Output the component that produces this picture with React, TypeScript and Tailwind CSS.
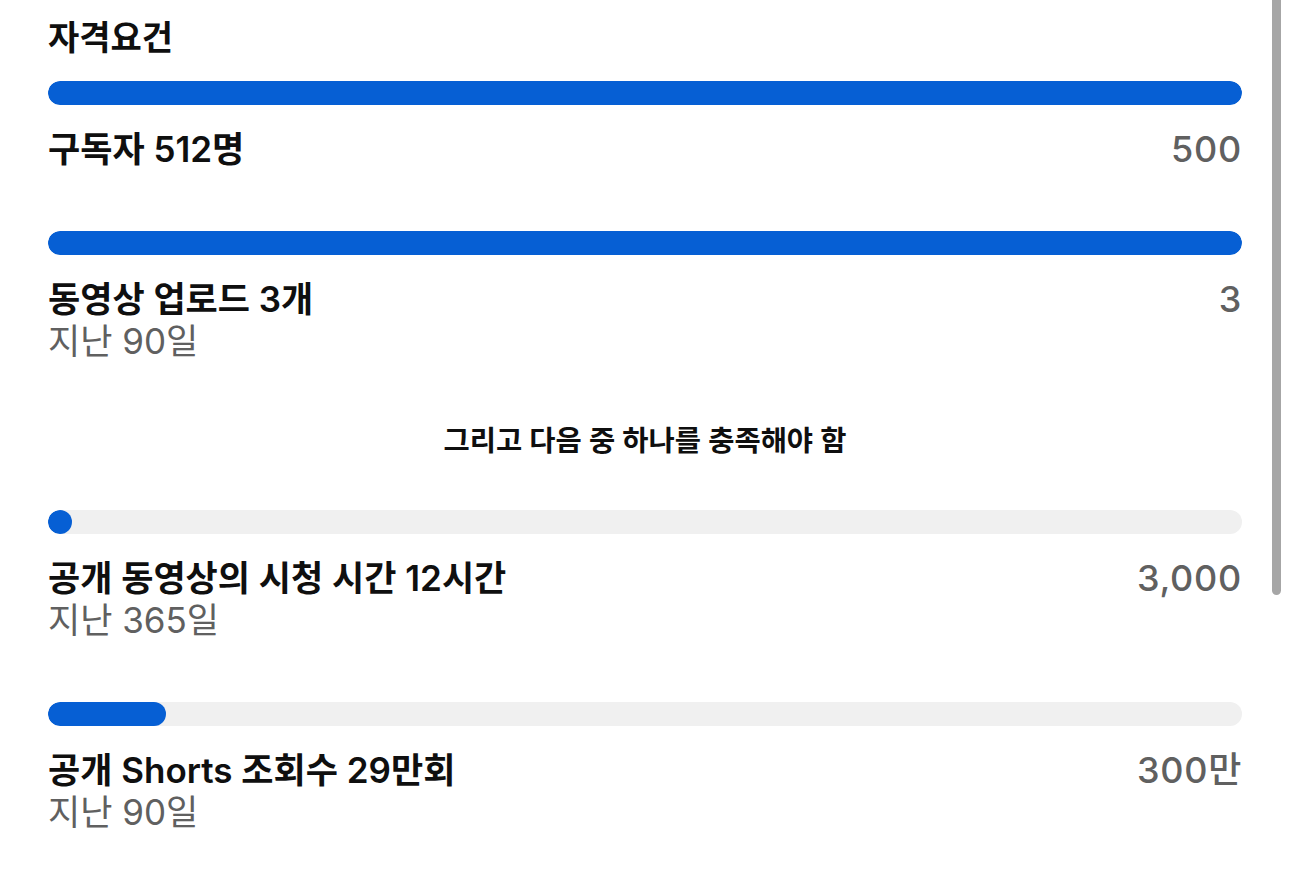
const items = [
  { label: "구독자 512명", value: "500", sub: "", fill: "w-full" },
  { label: "동영상 업로드 3개", value: "3", sub: "지난 90일", fill: "w-full" },
];

const optional = [
  { label: "공개 동영상의 시청 시간 12시간", value: "3,000", sub: "지난 365일", fill: "w-6" },
  { label: "공개 Shorts 조회수 29만회", value: "300만", sub: "지난 90일", fill: "w-[118px]" },
];

type Req = { label: string; value: string; sub: string; fill: string };

function Requirement({ r, className }: { r: Req; className: string }) {
  return (
    <div className={className}>
      <div className="h-6 w-full rounded-full bg-[#f0f0f0] overflow-hidden">
        <div className={`h-6 rounded-full bg-[#065fd4] ${r.fill}`} />
      </div>
      <div className="mt-[22px] flex justify-between items-center h-[44px]">
        <span className="text-[35px] font-semibold text-[#0f0f0f]">{r.label}</span>
        <span className="text-[36px] font-medium tracking-[0.02em] text-[#606060]">{r.value}</span>
      </div>
      {r.sub && (
        <div className="h-[40px] leading-[40px] text-[35px] text-[#606060]">{r.sub}</div>
      )}
    </div>
  );
}

export default function App() {
  return (
    <div
      className="relative w-[1290px] h-[888px] overflow-hidden bg-white"
      style={{ fontFamily: '"Inter", "Noto Sans CJK KR", sans-serif' }}
    >
      <div className="px-12 pt-4">
        <h1 className="h-[44px] leading-[44px] text-[34px] font-bold text-[#0f0f0f]">자격요건</h1>

        <Requirement r={items[0]} className="mt-[21px]" />
        <Requirement r={items[1]} className="mt-[60px]" />

        <p className="mt-[62px] text-center leading-[36px] text-[28.5px] font-semibold text-[#0f0f0f]">
          그리고 다음 중 하나를 충족해야 함
        </p>

        <Requirement r={optional[0]} className="mt-[51px]" />
        <Requirement r={optional[1]} className="mt-[62px]" />
      </div>

      {/* overlay scrollbar */}
      <div className="absolute right-[9px] top-[-20px] h-[615px] w-[9px] rounded-full bg-[#a6a6a6]" />
    </div>
  );
}
